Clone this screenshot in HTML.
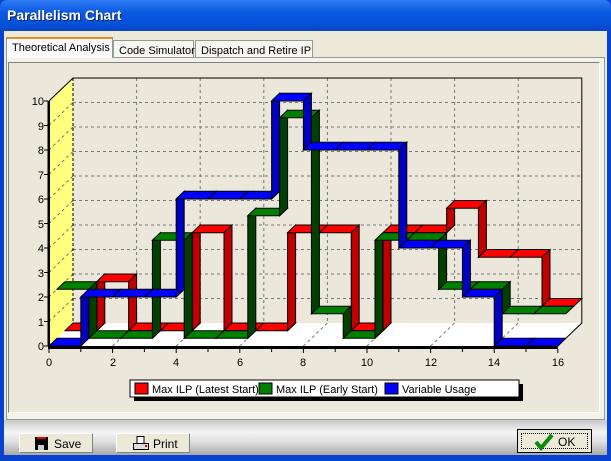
<!DOCTYPE html>
<html><head><meta charset="utf-8"><style>
*{margin:0;padding:0;box-sizing:border-box}
body{width:611px;height:461px;overflow:hidden;background:#0842d0;font-family:"Liberation Sans",sans-serif;position:relative}
#title{position:absolute;left:0;top:0;width:611px;height:31px;background:linear-gradient(#2f7bf5,#0a5ae0 40%,#0650d8 80%,#0846c0);border-radius:7px 7px 0 0}
#title span{position:absolute;left:7px;top:7px;color:#fff;font-weight:bold;font-size:14px;text-shadow:1px 1px #0a246a}
#body{position:absolute;left:4px;top:31px;width:603px;height:424px;background:#ece9d8}
.tab{position:absolute;height:19px;background:#f7f6f0;border:1px solid #919b9c;border-bottom:none;font-size:11px;color:#000;padding:4px 0 0 5px;white-space:nowrap}
#page{position:absolute;left:2px;top:26px;width:599px;height:363px;border:1px solid #919b9c;background:#f4f2ea}
#panel{position:absolute;left:4px;top:31px;width:592px;height:351px;border:1px solid #808080;border-right-color:#fff;border-bottom-color:#fff;background:#ebe7da}
#bottom{position:absolute;left:0;top:389px;width:603px;height:35px;background:linear-gradient(#c8c8c8,#f4f4f4 35%,#e2e2e2 60%,#a8a8a8)}
.btn{position:absolute;height:20px;background:#ece9d8;border:1px solid #fff;border-right-color:#808080;border-bottom-color:#808080;font-size:12px;color:#000}
</style></head><body>
<div id="title"><span>Parallelism Chart</span></div>
<div id="body">
 <div class="tab" style="left:191px;top:9px;width:118px">Dispatch and Retire IP</div>
 <div class="tab" style="left:109px;top:9px;width:81px">Code Simulator</div>
 <div id="page"></div>
 <div id="panel"></div>
 <div class="tab" style="left:2px;top:6px;width:107px;height:21px;background:#fcfcfe;border-top:2px solid #e68b2c;padding-top:3px">Theoretical Analysis</div>
 <div id="bottom">
  <div class="btn" style="left:15px;top:13px;width:74px"><svg width="16" height="16" style="position:absolute;left:14px;top:2px"><rect x="1" y="1" width="13" height="13" fill="#000"/><rect x="3" y="1" width="9" height="2" fill="#e00"/><rect x="4" y="9" width="6" height="5" fill="#ccc"/></svg><span style="position:absolute;left:34px;top:3px">Save</span></div>
  <div class="btn" style="left:112px;top:13px;width:74px"><svg width="18" height="16" style="position:absolute;left:15px;top:2px"><rect x="5" y="0.5" width="7" height="7" fill="#fff" stroke="#000"/><rect x="1.5" y="7.5" width="15" height="6" fill="#ddd" stroke="#000"/><rect x="13" y="9" width="2" height="2" fill="#d00"/></svg><span style="position:absolute;left:36px;top:3px">Print</span></div>
  <div class="btn" style="left:513px;top:9px;width:75px;height:24px;border:1px solid #000"><div style="position:absolute;left:3px;top:3px;right:3px;bottom:3px;border:1px dotted #000"></div><svg width="20" height="18" style="position:absolute;left:16px;top:3px"><path d="M2 9 L7 15 L18 2" stroke="#0a8a0a" stroke-width="4" fill="none"/></svg><span style="position:absolute;left:40px;top:5px">OK</span></div>
 </div>
</div>
<svg id="ch" width="611" height="461" style="position:absolute;left:0;top:0">
 <g font-size="11" fill="#000" font-family="Liberation Sans,sans-serif">
  <text x="49" y="366" text-anchor="middle">0</text>
  <text x="113" y="366" text-anchor="middle">2</text>
  <text x="176" y="366" text-anchor="middle">4</text>
  <text x="240" y="366" text-anchor="middle">6</text>
  <text x="303" y="366" text-anchor="middle">8</text>
  <text x="367" y="366" text-anchor="middle">10</text>
  <text x="431" y="366" text-anchor="middle">12</text>
  <text x="494" y="366" text-anchor="middle">14</text>
  <text x="558" y="366" text-anchor="middle">16</text>
  <text x="44" y="350" text-anchor="end">0</text>
  <text x="44" y="326" text-anchor="end">1</text>
  <text x="44" y="301" text-anchor="end">2</text>
  <text x="44" y="277" text-anchor="end">3</text>
  <text x="44" y="252" text-anchor="end">4</text>
  <text x="44" y="228" text-anchor="end">5</text>
  <text x="44" y="203" text-anchor="end">6</text>
  <text x="44" y="179" text-anchor="end">7</text>
  <text x="44" y="154" text-anchor="end">8</text>
  <text x="44" y="130" text-anchor="end">9</text>
  <text x="44" y="105" text-anchor="end">10</text>
 </g>
 <g id="leg">
  <rect x="134" y="384" width="389" height="17" fill="#000"/>
  <rect x="130" y="380" width="389" height="17" fill="#fff" stroke="#000"/>
  <rect x="135" y="383" width="13" height="11" fill="#f00" stroke="#000"/>
  <rect x="259" y="383" width="13" height="11" fill="#008000" stroke="#000"/>
  <rect x="385" y="383" width="13" height="11" fill="#00f" stroke="#000"/>
  <g font-size="11" fill="#000" font-family="Liberation Sans,sans-serif">
   <text x="152" y="393">Max ILP (Latest Start)</text>
   <text x="276" y="393">Max ILP (Early Start)</text>
   <text x="402" y="393">Variable Usage</text>
  </g>
 </g>
</svg>
<script>
(function(){
var s=document.getElementById('ch'),NS='http://www.w3.org/2000/svg',h='';
function X(v){return 49+v*31.8}function Y(l){return 346-l*24.5}
var DX=24,DY=-23;
function poly(p,f,st,ex){return '<polygon points="'+p.map(function(a){return a[0].toFixed(1)+','+a[1].toFixed(1)}).join(' ')+'" fill="'+f+'" stroke="'+(st||'none')+'" '+(ex||'')+'/>'}
h+=poly([[49,346],[X(16),346],[X(16)+DX,346+DY],[49+DX,346+DY]],'#fff');
h+=poly([[49,Y(10)],[49+DX,Y(10)+DY],[49+DX,346+DY],[49,346]],'#ffff80');
var d='stroke="#777" stroke-dasharray="3,3" stroke-width="1"';
for(var l=1;l<=9;l++){var y=Y(l)+DY;h+='<line x1="'+(49+DX)+'" y1="'+y+'" x2="'+(X(16)+DX)+'" y2="'+y+'" '+d+'/>';h+='<line x1="49" y1="'+Y(l)+'" x2="'+(49+DX)+'" y2="'+y+'" '+d+'/>';}
for(var v=2;v<=14;v+=2){var x=X(v)+DX;h+='<line x1="'+x+'" y1="'+(Y(10)+DY)+'" x2="'+x+'" y2="'+(346+DY)+'" '+d+'/>';h+='<line x1="'+X(v)+'" y1="346" x2="'+x+'" y2="'+(346+DY)+'" '+d+'/>';}
h+='<line x1="'+(49+DX)+'" y1="'+(Y(10)+DY)+'" x2="'+(49+DX)+'" y2="'+(346+DY)+'" stroke="#000" stroke-dasharray="3,2"/>';
h+='<polyline points="'+(49)+','+Y(10)+' '+(49+DX)+','+(Y(10)+DY)+' '+(X(16)+DX)+','+(Y(10)+DY)+' '+(X(16)+DX)+','+(346+DY)+' '+X(16)+',346" fill="none" stroke="#000"/>';
var series=[
 {v:[0,2,0,0,4,0,0,4,4,0,4,4,5,3,3,1],t:'#ff0000',sd:'#c00000',z0:2/3,z1:1},
 {v:[2,0,0,4,0,0,5,9,1,0,4,4,2,2,1,1],t:'#008000',sd:'#004000',z0:1/3,z1:2/3},
 {v:[0,2,2,2,6,6,6,10,8,8,8,4,4,2,0,0],t:'#0000ff',sd:'#0000c0',z0:0,z1:1/3}];
series.forEach(function(S){
 var a0=S.z0*DX,b0=S.z0*DY,a1=S.z1*DX,b1=S.z1*DY;
 for(var i=0;i<16;i++){
  if(i>0&&S.v[i]!=S.v[i-1]){var x=X(i),y1=Y(S.v[i-1]),y2=Y(S.v[i]);
   h+=poly([[x+a0,y1+b0],[x+a0,y2+b0],[x+a1,y2+b1],[x+a1,y1+b1]],S.sd,'#000');}
  var y=Y(S.v[i]);
  h+=poly([[X(i)+a0,y+b0],[X(i+1)+a0,y+b0],[X(i+1)+a1,y+b1],[X(i)+a1,y+b1]],S.t,'#000');
 }
});
h+='<rect x="47.5" y="'+Y(10)+'" width="2.5" height="'+(346-Y(10))+'" fill="#000"/>';
h+='<rect x="48" y="346" width="'+(X(16)-48)+'" height="3" fill="#000"/>';
for(var v=0;v<=16;v++){h+='<line x1="'+X(v)+'" y1="349" x2="'+X(v)+'" y2="'+(v%2?352:353)+'" stroke="#000"/>';}
for(var l=0;l<=10;l++){h+='<line x1="44" y1="'+Y(l)+'" x2="48" y2="'+Y(l)+'" stroke="#000"/>';}
var g=document.createElementNS(NS,'g');g.innerHTML=h;s.insertBefore(g,s.firstChild);
})();
</script>
</body></html>
